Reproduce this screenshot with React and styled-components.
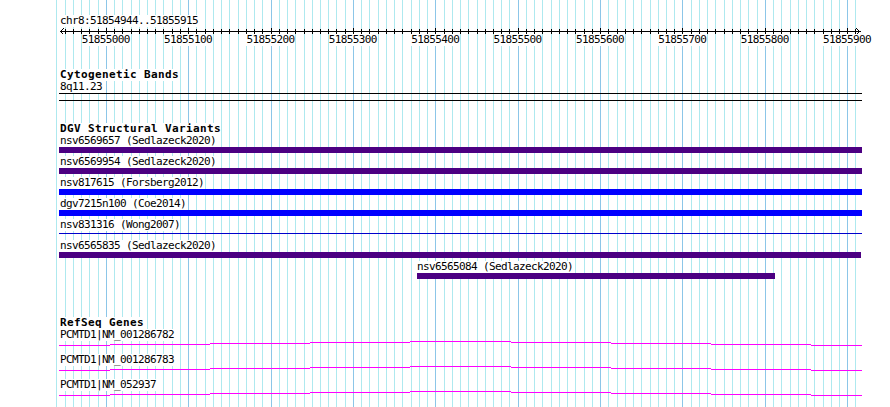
import React from 'react';
import styled, { createGlobalStyle } from 'styled-components';

const VIEW_START = 51854944;
const VIEW_END = 51855915;
const PX_PER_BP = 0.8238;
const toX = (bp) => 106.3 + (bp - 51855000) * PX_PER_BP;
const TRACK_LEFT = 59;
const TRACK_RIGHT = 862;

const GlobalStyle = createGlobalStyle`
  html, body { margin: 0; padding: 0; background: #ffffff; }
  #root { width: 890px; height: 407px; }
`;

const Page = styled.div`
  position: relative;
  width: 890px;
  height: 407px;
  overflow: hidden;
  background: #ffffff;
  color: #000;
  font-family: "DejaVu Sans Mono", "Liberation Mono", monospace;
`;

const GridLayer = styled.svg`
  position: absolute;
  left: 0;
  top: 0;
  z-index: 0;
  display: block;
`;

const Tracks = styled.div`
  position: relative;
  z-index: 1;
  padding-top: 15px;
  display: flex;
  flex-direction: column;
  align-items: flex-start;
`;

const SmallText = styled.div`
  font-size: 11px;
  line-height: 12px;
  height: 12px;
  letter-spacing: -0.62px;
  white-space: nowrap;
  background: #ffffff;
  margin-left: 60px;
`;

const SectionTitle = styled.div`
  font-size: 11px;
  font-weight: bold;
  line-height: 12px;
  height: 12px;
  letter-spacing: 0.38px;
  white-space: nowrap;
  background: #ffffff;
  margin-left: 60px;
  margin-top: ${(p) => p.$gap}px;
`;

const AxisSvg = styled.svg`
  display: block;
`;

const TickLabels = styled.div`
  position: relative;
  width: 890px;
  height: 12px;
  margin-top: -1px;
`;

const TickLabel = styled.span`
  position: absolute;
  top: 0;
  transform: translateX(-50%);
  font-size: 11px;
  line-height: 12px;
  letter-spacing: -0.62px;
  white-space: nowrap;
  background: #ffffff;
`;

const BandBox = styled.div`
  margin-left: ${TRACK_LEFT}px;
  width: ${TRACK_RIGHT - TRACK_LEFT}px;
  height: 6px;
  border-top: 1px solid #000;
  border-bottom: 1px solid #000;
`;

const VariantRow = styled.div`
  display: flex;
  flex-direction: column;
  align-items: flex-start;
  height: 21px;
`;

const FeatureLabel = styled(SmallText)`
  margin-left: 0;
`;

const Bar = styled.div`
  height: ${(p) => (p.$thin ? 1 : 6)}px;
  margin-top: ${(p) => (p.$thin ? 2 : 0)}px;
  background: ${(p) => p.$color};
`;

const GeneRow = styled.div`
  display: flex;
  flex-direction: column;
  align-items: flex-start;
  margin-bottom: 8px;
`;

const HatSvg = styled.svg`
  display: block;
`;

const PURPLE = '#4b0082';
const BLUE = '#0000ff';
const DARKBLUE = '#0000cc';

const variants = [
  { name: 'nsv6569657 (Sedlazeck2020)', start: 51854000, end: 51857000, color: PURPLE },
  { name: 'nsv6569954 (Sedlazeck2020)', start: 51854000, end: 51857000, color: PURPLE },
  { name: 'nsv817615 (Forsberg2012)', start: 51854000, end: 51857000, color: BLUE },
  { name: 'dgv7215n100 (Coe2014)', start: 51854000, end: 51857000, color: BLUE },
  { name: 'nsv831316 (Wong2007)', start: 51854000, end: 51857000, color: DARKBLUE, thin: true },
  { name: 'nsv6565835 (Sedlazeck2020)', start: 51854000, end: 51855917, color: PURPLE },
  { name: 'nsv6565084 (Sedlazeck2020)', start: 51855378, end: 51855812, color: PURPLE },
];

const genes = ['PCMTD1|NM_001286782', 'PCMTD1|NM_001286783', 'PCMTD1|NM_052937'];

const gridBps = [];
for (let bp = 51854940; bp <= VIEW_END; bp += 10) gridBps.push(bp);
const tickBps = gridBps.filter((bp) => bp >= VIEW_START && toX(bp) < 858);
const labelBps = [];
for (let bp = 51855000; bp <= VIEW_END; bp += 100) labelBps.push(bp);

function Grid() {
  return (
    <GridLayer width={890} height={407} shapeRendering="crispEdges">
      {gridBps.map((bp) => (
        <rect
          key={bp}
          x={Math.floor(toX(bp))}
          y={0}
          width={1}
          height={407}
          fill={bp % 100 === 0 ? '#8cc6e8' : '#aee9ef'}
        />
      ))}
    </GridLayer>
  );
}

function Axis() {
  return (
    <AxisSvg width={890} height={8} shapeRendering="crispEdges">
      <rect x={60} y={4} width={801} height={1} fill="#000" />
      {tickBps.map((bp) => {
        const major = bp % 100 === 0;
        return (
          <rect
            key={bp}
            x={Math.floor(toX(bp))}
            y={major ? 1 : 2}
            width={1}
            height={major ? 7 : 5}
            fill="#000"
          />
        );
      })}
      <path d="M63.5 1.5 L60.5 4.5 L63.5 7.5" stroke="#000" fill="none" />
      <path d="M856.5 1.5 L859.5 4.5 L856.5 7.5" stroke="#000" fill="none" />
    </AxisSvg>
  );
}

function hatRuns(x0, peak, x1, h) {
  const runs = [];
  let cur = null;
  for (let x = x0; x <= x1; x++) {
    const span = x <= peak ? peak - x0 : x1 - peak;
    const lift = Math.round(h * (1 - Math.abs(x - peak) / span));
    const y = h - lift;
    if (cur && cur.y === y) cur.w += 1;
    else {
      cur = { x, y, w: 1 };
      runs.push(cur);
    }
  }
  return runs;
}

const HAT = hatRuns(59, 460, 861, 4);

function GeneHat() {
  return (
    <HatSvg width={890} height={5} shapeRendering="crispEdges">
      {HAT.map((r) => (
        <rect key={r.x} x={r.x} y={r.y} width={r.w} height={1} fill="#ff00ff" />
      ))}
    </HatSvg>
  );
}

function barBox(v) {
  const left = Math.max(TRACK_LEFT, Math.floor(toX(v.start)));
  const right = Math.min(TRACK_RIGHT, Math.floor(toX(v.end)));
  return { left, width: right - left };
}

export default function App() {
  return (
    <>
      <GlobalStyle />
      <Page>
        <Grid />
        <Tracks>
          <SmallText>chr8:51854944..51855915</SmallText>
          <Axis />
          <TickLabels>
            {labelBps.map((bp) => (
              <TickLabel key={bp} style={{ left: `${toX(bp) - 0.6}px` }}>
                {bp}
              </TickLabel>
            ))}
          </TickLabels>

          <SectionTitle $gap={23}>Cytogenetic Bands</SectionTitle>
          <SmallText>8q11.23</SmallText>
          <BandBox />

          <SectionTitle $gap={22}>DGV Structural Variants</SectionTitle>
          {variants.map((v) => {
            const b = barBox(v);
            return (
              <VariantRow key={v.name}>
                <FeatureLabel style={{ marginLeft: `${Math.max(60, b.left)}px` }}>{v.name}</FeatureLabel>
                <Bar
                  $color={v.color}
                  $thin={v.thin}
                  style={{ marginLeft: `${b.left}px`, width: `${b.width}px` }}
                />
              </VariantRow>
            );
          })}

          <SectionTitle $gap={35}>RefSeq Genes</SectionTitle>
          {genes.map((g) => (
            <GeneRow key={g}>
              <SmallText>{g}</SmallText>
              <GeneHat />
            </GeneRow>
          ))}
        </Tracks>
      </Page>
    </>
  );
}
